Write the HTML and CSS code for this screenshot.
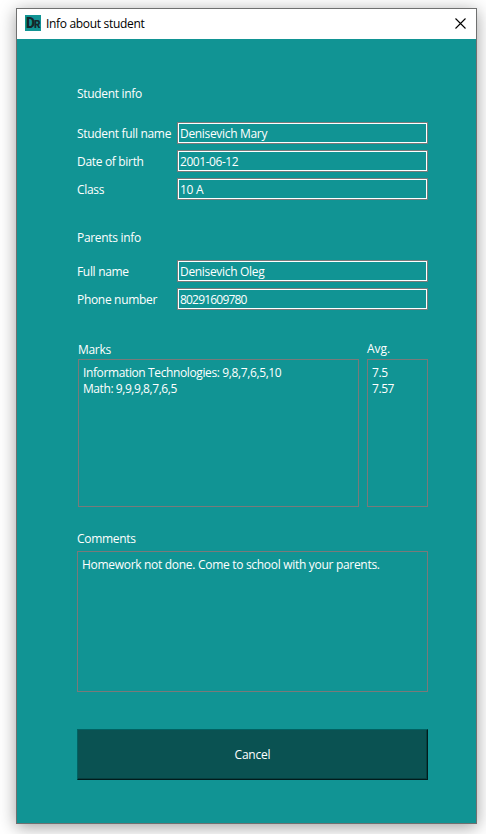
FILE: index.html
```html
<!DOCTYPE html>
<html lang="en">
<head>
<meta charset="utf-8">
<title>Info about student</title>
<link rel="stylesheet" href="styles.css">
</head>
<body>
<main class="window">
  <header class="titlebar">
    <span class="logo">D<small>R</small></span>
    <h1 class="title">Info about student</h1>
    <svg class="close" width="11" height="11" viewBox="0 0 11 11"><path d="M.5.5l10 10M10.5.5l-10 10"/></svg>
  </header>
  <div class="content">
    <h2 class="heading">Student info</h2>
    <div class="fields student">
      <span>Student full name</span><span class="field">Denisevich Mary</span>
      <span>Date of birth</span><span class="field date">2001-06-12</span>
      <span>Class</span><span class="field">10 A</span>
    </div>
    <h2 class="heading">Parents info</h2>
    <div class="fields parents">
      <span>Full name</span><span class="field">Denisevich Oleg</span>
      <span>Phone number</span><span class="field digits">80291609780</span>
    </div>
    <div class="marks">
      <section class="subjects">
        <h2 class="heading">Marks</h2>
        <div class="box"><p class="subject">Information Technologies: 9,8,7,6,5,10</p><p class="subject math">Math: 9,9,9,8,7,6,5</p></div>
      </section>
      <section class="average">
        <h2 class="heading">Avg.</h2>
        <div class="box"><p>7.5</p><p>7.57</p></div>
      </section>
    </div>
    <h2 class="heading">Comments</h2>
    <div class="box comments"><p class="comment">Homework not done. Come to school with your parents.</p></div>
    <button class="cancel" type="button">Cancel</button>
  </div>
</main>
</body>
</html>
```
FILE: styles.css
```css
* { box-sizing: border-box; }
body {
  margin: 0;
  height: 834px;
  padding: 8px 9px 10px 16px;
  overflow: hidden;
  background: #fff;
  color: #fff;
  font: 12px/16px "Open Sans", "Noto Sans", sans-serif;
  letter-spacing: -0.32px;
}
h1, h2, p { margin: 0; font-size: inherit; font-weight: 400; }
.window {
  width: 461px;
  height: 816px;
  border: 1px solid #6f7070;
  background: #119494;
  box-shadow: 0 3px 16px rgba(0, 0, 0, .38);
}
.titlebar {
  display: flex;
  align-items: center;
  height: 30px;
  padding: 0 10px 0 8px;
  background: #fff;
  color: #000;
}
.logo {
  width: 16px;
  height: 16px;
  margin: -2px 5px 0 0;
  padding-left: 1px;
  background: #119494;
  color: #15272b;
  font: 900 14px/16px "Roboto", sans-serif;
  letter-spacing: -1px;
  white-space: nowrap;
  overflow: hidden;
}
.logo small { font-size: 10px; }
.title { flex: 1; }
.close { margin-top: -2px; fill: none; stroke: #000; stroke-width: 1.1; }
.content { padding: 46px 48px 0 60px; }
.heading { height: 16px; line-height: 17px; }
.fields {
  display: grid;
  grid-template-columns: 100px 251px;
  grid-auto-rows: 22px;
  row-gap: 6px;
  line-height: 23px;
  white-space: nowrap;
}
.student { margin: 21px 0 29px; }
.parents { margin: 15px 0 31px; }
.field {
  height: 22px;
  padding-left: 2px;
  border: 1px solid #7a7a7a;
  box-shadow: inset 0 0 0 1px #fff;
  line-height: 21px;
}
.date { letter-spacing: -0.45px; }
.digits { letter-spacing: -0.8px; }
.marks {
  display: grid;
  grid-template-columns: 281px 61px;
  column-gap: 8px;
  margin: 0 0 23px 1px;
}
.marks .heading { height: 18px; }
.average .heading { line-height: 15px; letter-spacing: 0; }
.average .box { letter-spacing: -0.42px; }
.subject { letter-spacing: -0.38px; }
.math { letter-spacing: -0.43px; }
.box { height: 148px; padding: 5px 4px; border: 1px solid #7a7a7a; white-space: nowrap; }
.comments { height: 141px; margin-top: 5px; letter-spacing: -0.3px; }
.cancel {
  display: block;
  width: 351px;
  height: 51px;
  margin-top: 37px;
  padding: 0;
  border: 1px solid #006363;
  border-right-color: #001c1c;
  border-bottom-color: #001c1c;
  box-shadow: inset -1px -1px #073f3f;
  background: #0a5252;
  color: inherit;
  font: inherit;
  letter-spacing: -0.2px;
}
```
